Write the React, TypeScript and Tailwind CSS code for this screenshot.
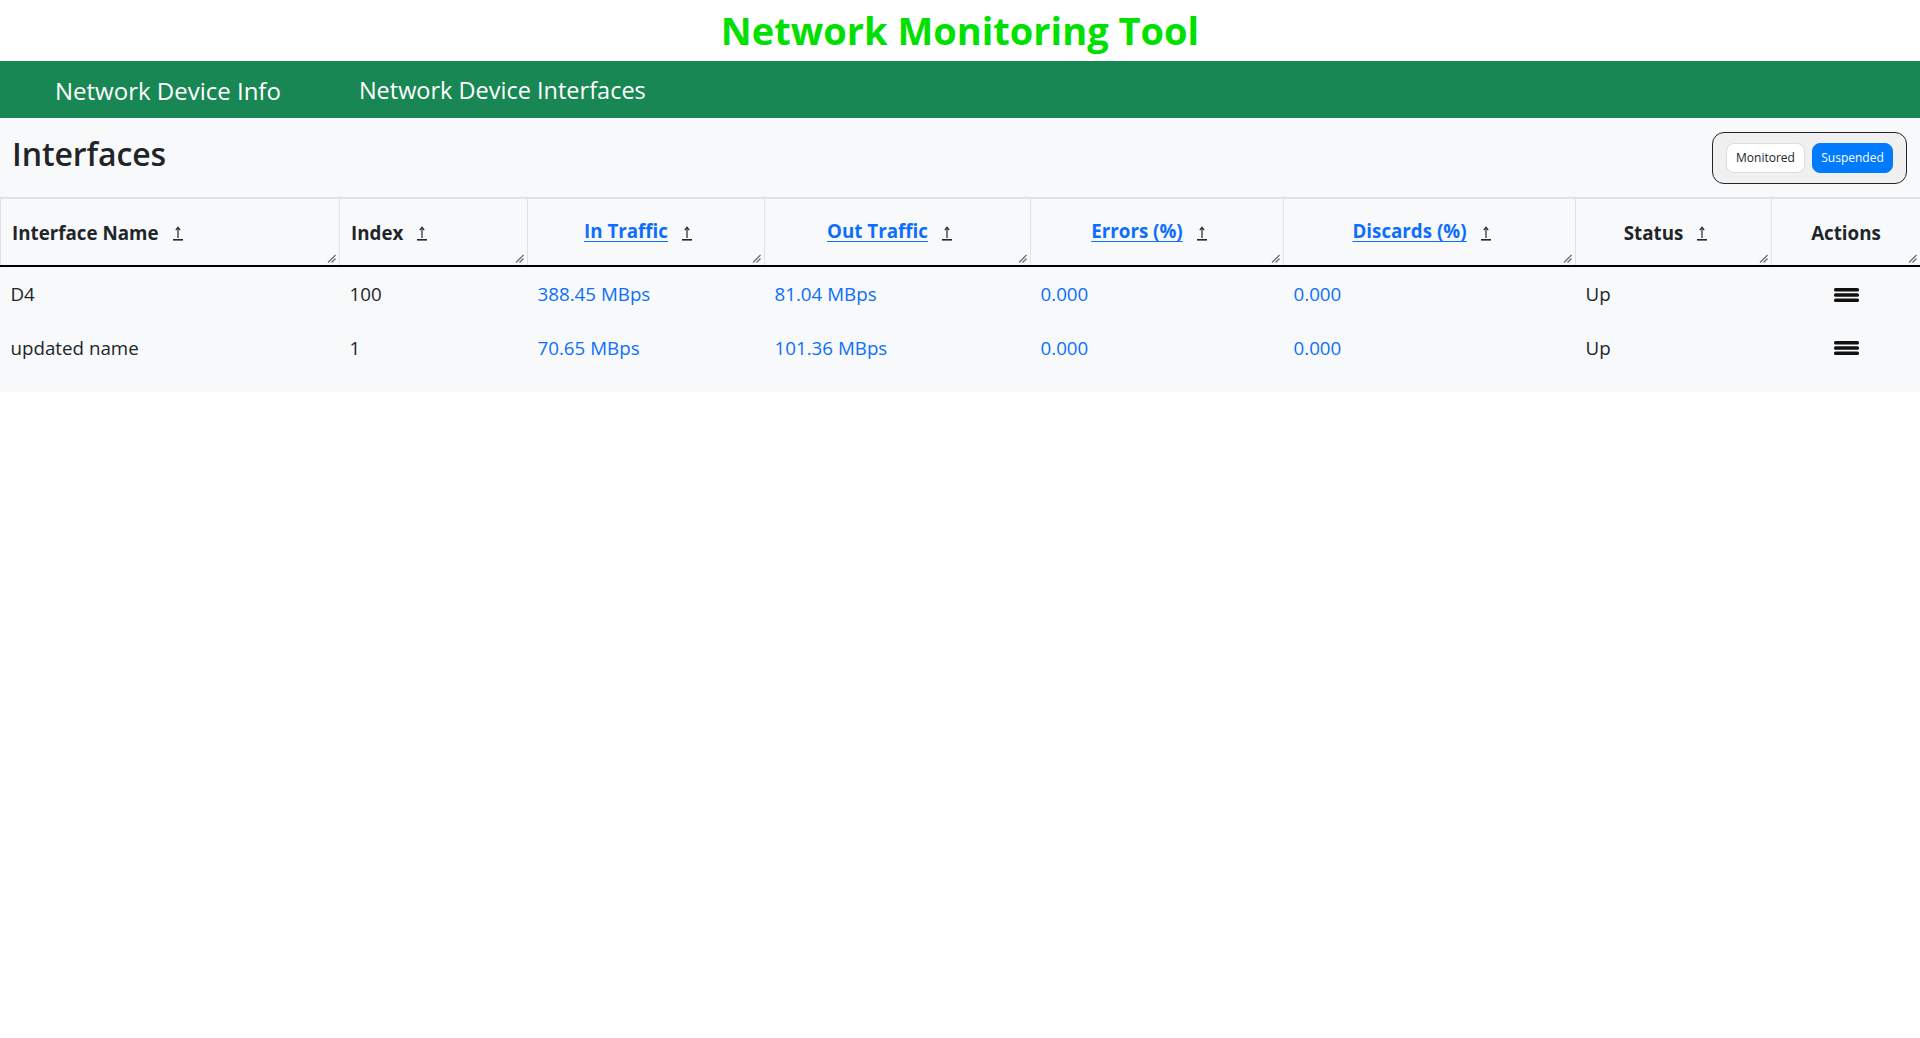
import React from 'react';

type Col = {
  key: string;
  label: string;
  width: number;
  link?: boolean;
  sortable?: boolean;
  align: 'left' | 'center';
};

const columns: Col[] = [
  { key: 'name', label: 'Interface Name', width: 339, sortable: true, align: 'left' },
  { key: 'index', label: 'Index', width: 188, sortable: true, align: 'left' },
  { key: 'inTraffic', label: 'In Traffic', width: 237, link: true, sortable: true, align: 'center' },
  { key: 'outTraffic', label: 'Out Traffic', width: 266, link: true, sortable: true, align: 'center' },
  { key: 'errors', label: 'Errors (%)', width: 253, link: true, sortable: true, align: 'center' },
  { key: 'discards', label: 'Discards (%)', width: 292, link: true, sortable: true, align: 'center' },
  { key: 'status', label: 'Status', width: 196, sortable: true, align: 'center' },
  { key: 'actions', label: 'Actions', width: 149, align: 'center' },
];

const rows = [
  { name: 'D4', index: '100', inTraffic: '388.45 MBps', outTraffic: '81.04 MBps', errors: '0.000', discards: '0.000', status: 'Up' },
  { name: 'updated name', index: '1', inTraffic: '70.65 MBps', outTraffic: '101.36 MBps', errors: '0.000', discards: '0.000', status: 'Up' },
];

function SortArrow() {
  return (
    <svg width="10" height="16" viewBox="0 0 10 16" className="ml-[14px] shrink-0">
      <path d="M5 2.5 V13" stroke="#212529" strokeWidth="1.2" fill="none" />
      <path d="M2.8 5.2 L5 2.2 L7.2 5.2" stroke="#212529" strokeWidth="1.2" fill="none" />
      <rect x="0" y="14" width="10" height="1.6" fill="#212529" />
    </svg>
  );
}

function ResizeHandle() {
  return (
    <svg width="9" height="9" viewBox="0 0 9 9" className="absolute right-[3px] bottom-[2px]">
      <path d="M1 8.5 L8.5 1" stroke="#6c6c6c" strokeWidth="1.3" />
      <path d="M4.5 8.5 L8.5 4.5" stroke="#6c6c6c" strokeWidth="1.3" />
    </svg>
  );
}

function BarsIcon() {
  return (
    <svg width="25" height="14" viewBox="0 0 25 14" className="mx-auto block">
      <rect x="0" y="0" width="25" height="3.6" rx="1.6" fill="#111" />
      <rect x="0" y="5.2" width="25" height="3.6" rx="1.6" fill="#111" />
      <rect x="0" y="10.4" width="25" height="3.6" rx="1.6" fill="#111" />
    </svg>
  );
}

export default function App() {
  const [mode, setMode] = React.useState<'monitored' | 'suspended'>('suspended');

  const blueCols = ['inTraffic', 'outTraffic', 'errors', 'discards'];

  return (
    <div className="min-h-screen bg-white font-['Segoe_UI','Open_Sans',sans-serif] text-[#212529]">
      {/* Title */}
      <h1 className="h-[61px] text-center text-[38px] font-bold leading-[61px] text-[#00e000]">
        Network Monitoring Tool
      </h1>

      {/* Nav */}
      <nav className="flex h-[57px] items-center bg-[#198754] pl-[15px] pt-[2px]">
        <a className="cursor-pointer px-10 text-[24px] text-white">Network Device Info</a>
        <a className="cursor-pointer px-[38px] text-[23.5px] text-white">Network Device Interfaces</a>
      </nav>

      <div className="bg-[#f8f9fa] pb-[18px]">
        {/* Header */}
        <div className="flex h-[79px] items-center justify-between pl-[12px] pr-[13px]">
          <h2 className="mb-[8px] text-[32px] font-semibold leading-none tracking-[-0.1px]">Interfaces</h2>
          <div className="flex items-center gap-[7px] rounded-[12px] border border-[#212529] bg-[#f0f0f0] px-[13px] py-[10px]">
            <button
              onClick={() => setMode('monitored')}
              className={`h-[30px] w-[79px] rounded-[8px] border text-[12px] ${
                mode === 'monitored' ? 'border-[#007bff] bg-[#007bff] text-white' : 'border-[#dcdcdc] bg-white text-[#212529]'
              }`}
            >
              Monitored
            </button>
            <button
              onClick={() => setMode('suspended')}
              className={`h-[30px] w-[81px] rounded-[8px] border text-[12px] ${
                mode === 'suspended' ? 'border-[#007bff] bg-[#007bff] text-white' : 'border-[#dcdcdc] bg-white text-[#212529]'
              }`}
            >
              Suspended
            </button>
          </div>
        </div>

        {/* Table */}
        <table className="w-full table-fixed border-collapse border-t-2 border-[#dee2e6]">
          <colgroup>
            {columns.map((c) => (
              <col key={c.key} style={{ width: c.width }} />
            ))}
          </colgroup>
          <thead>
            <tr className="h-[68px] border-b-2 border-black">
              {columns.map((c) => (
                <th key={c.key} className="relative border-x border-[#dee2e6] p-0 text-[18.75px] font-bold">
                  <div
                    className={`flex items-center px-[11px] pt-[2px] ${
                      c.align === 'center' ? (c.sortable ? 'justify-center pr-[27px]' : 'justify-center') : 'justify-start'
                    }`}
                  >
                    {c.link ? (
                      <a className="mb-[4px] cursor-pointer text-[#0d6efd] underline underline-offset-[3px]">{c.label}</a>
                    ) : (
                      <span>{c.label}</span>
                    )}
                    {c.sortable && <SortArrow />}
                  </div>
                  <ResizeHandle />
                </th>
              ))}
            </tr>
          </thead>
          <tbody>
            {rows.map((r, i) => (
              <tr key={i} className="h-[54px] text-[18.75px]">
                {columns.map((c) => (
                  <td
                    key={c.key}
                    className={`px-[10px] pt-[2px] ${blueCols.includes(c.key) ? 'text-[#0d6efd]' : 'text-[#212529]'}`}
                  >
                    {c.key === 'actions' ? <BarsIcon /> : (r as Record<string, string>)[c.key]}
                  </td>
                ))}
              </tr>
            ))}
          </tbody>
        </table>
      </div>
    </div>
  );
}
